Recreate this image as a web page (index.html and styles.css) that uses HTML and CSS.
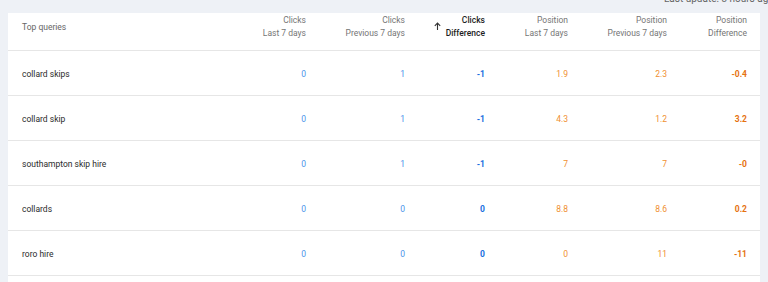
FILE: index.html
```html
<!DOCTYPE html>
<html lang="en">
<head>
    <meta charset="UTF-8">
    <title>Top queries</title>
    <link rel="stylesheet" href="styles.css">
</head>
<body>

<div class="topbar">
    <span class="updated">Last update: 3 hours ago</span>
</div>

<div class="card">
    <div class="row head">
        <div class="cell query">Top queries</div>
        <div class="cell">Clicks<br>Last 7 days</div>
        <div class="cell">Clicks<br>Previous 7 days</div>
        <div class="cell sorted">
            <svg class="arrow" width="7" height="8" viewBox="0 0 7 8">
                <path d="M3.5 8V1.2M0.8 3.8L3.5 1.1L6.2 3.8" fill="none" stroke="#333" stroke-width="1.1"/>
            </svg>
            <span>Clicks<br>Difference</span>
        </div>
        <div class="cell">Position<br>Last 7 days</div>
        <div class="cell">Position<br>Previous 7 days</div>
        <div class="cell">Position<br>Difference</div>
    </div>

    <div class="row">
        <div class="cell query">collard skips</div>
        <div class="cell clicks">0</div>
        <div class="cell clicks">1</div>
        <div class="cell clicks diff">-1</div>
        <div class="cell pos">1.9</div>
        <div class="cell pos">2.3</div>
        <div class="cell pos diff">-0.4</div>
    </div>
    <div class="row">
        <div class="cell query">collard skip</div>
        <div class="cell clicks">0</div>
        <div class="cell clicks">1</div>
        <div class="cell clicks diff">-1</div>
        <div class="cell pos">4.3</div>
        <div class="cell pos">1.2</div>
        <div class="cell pos diff">3.2</div>
    </div>
    <div class="row">
        <div class="cell query">southampton skip hire</div>
        <div class="cell clicks">0</div>
        <div class="cell clicks">1</div>
        <div class="cell clicks diff">-1</div>
        <div class="cell pos">7</div>
        <div class="cell pos">7</div>
        <div class="cell pos diff">-0</div>
    </div>
    <div class="row">
        <div class="cell query">collards</div>
        <div class="cell clicks">0</div>
        <div class="cell clicks">0</div>
        <div class="cell clicks diff">0</div>
        <div class="cell pos">8.8</div>
        <div class="cell pos">8.6</div>
        <div class="cell pos diff">0.2</div>
    </div>
    <div class="row">
        <div class="cell query">roro hire</div>
        <div class="cell clicks">0</div>
        <div class="cell clicks">0</div>
        <div class="cell clicks diff">0</div>
        <div class="cell pos">0</div>
        <div class="cell pos">11</div>
        <div class="cell pos diff">-11</div>
    </div>
</div>

</body>
</html>
```

FILE: styles.css
```css
body {
    margin: 0;
    background-color: #eef1f6;
    font-family: Roboto, "Liberation Sans", sans-serif;
    overflow: hidden;
    height: 282px;
}

/* barre du haut, texte coupé en haut de l'écran */
.topbar {
    height: 13px;
    display: flex;
    justify-content: flex-end;
    overflow: hidden;
}

.updated {
    font-size: 10px;
    line-height: 10px;
    color: #666666;
    margin-top: -6px;
    margin-right: -6px;
    white-space: nowrap;
}

.card {
    background-color: #ffffff;
    margin-left: 8px;
    width: 752px;
    height: 300px;
}

.row {
    display: grid;
    grid-template-columns: 185px 99px 99px 80px 83px 99px 80px;
    align-items: center;
    height: 45px;
    padding: 1px 13px 0 14px;
    border-bottom: 1px solid #e6e6e6;
    box-sizing: border-box;
    font-size: 8.5px;
}

.row.head {
    height: 38px;
    line-height: 13px;
    color: #757575;
    padding-top: 0;
    padding-bottom: 10px;
}

.cell {
    text-align: right;
}

.cell.query {
    text-align: left;
    color: #2b2b2b;
}

.head .cell.query {
    color: #666666;
    margin-top: 1px;
}

.sorted {
    display: flex;
    justify-content: flex-end;
    align-items: center;
    color: #1e1e1e;
    font-weight: 500;
}

.arrow {
    margin-right: 5px;
    margin-top: -1px;
}

.clicks {
    color: #4b93ea;
}

.clicks.diff {
    color: #1a6fe0;
    font-weight: bold;
}

.pos {
    color: #f08f30;
}

.pos.diff {
    color: #e57210;
    font-weight: bold;
}
```
